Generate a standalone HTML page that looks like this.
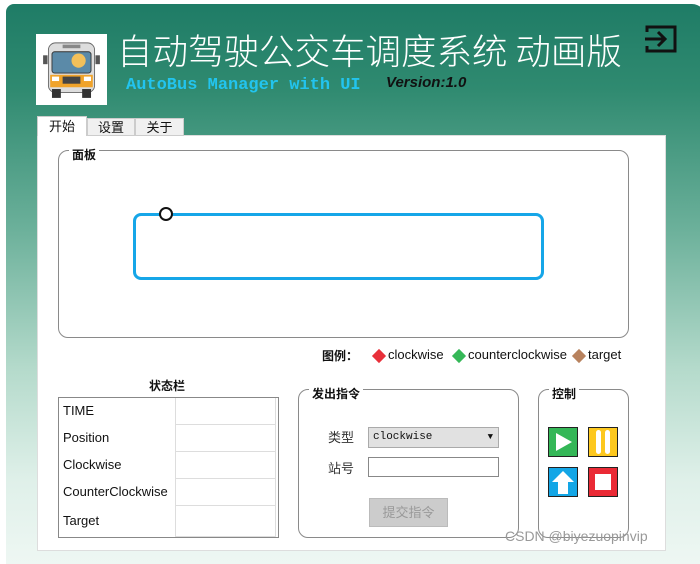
<!DOCTYPE html>
<html><head><meta charset="utf-8"><style>
*{margin:0;padding:0;box-sizing:border-box}
body{width:700px;height:557px;overflow:hidden;background:#fff;position:relative;font-family:"Liberation Sans","Noto Sans CJK SC",sans-serif;font-size:13px;color:#111}
.a{position:absolute}
#win{left:6px;top:4px;width:700px;height:560px;border-radius:8px 14px 0 0;background:linear-gradient(180deg,#1f7c66 0%,#2f8a70 15%,#6bb09a 40%,#b4dacb 65%,#dff0e9 85%,#eef7f3 100%)}
.gb{border:1px solid #8a8a8a;border-radius:10px}
.gl{background:#fff;padding:0 3px;font-weight:bold;font-size:12px}
</style></head><body>
<div id="win" class="a"></div>
<div class="a" style="left:36px;top:34px;width:71px;height:71px;background:#fff">
<svg width="71" height="71" viewBox="0 0 80 80">
<rect x="14" y="10" width="52" height="56" rx="8" fill="#ddd" stroke="#666"/>
<rect x="30" y="12" width="20" height="4" fill="#888"/>
<rect x="18" y="20" width="44" height="24" rx="3" fill="#5b8aa8" stroke="#333"/>
<circle cx="48" cy="30" r="8" fill="#f3c05a"/>
<rect x="16" y="46" width="48" height="14" fill="#f0a32a"/>
<rect x="30" y="48" width="20" height="8" fill="#444"/>
<rect x="18" y="48" width="8" height="5" fill="#fff"/><rect x="54" y="48" width="8" height="5" fill="#fff"/>
<rect x="18" y="62" width="10" height="10" fill="#333"/><rect x="52" y="62" width="10" height="10" fill="#333"/>
<rect x="8" y="24" width="5" height="10" fill="#555"/><rect x="67" y="24" width="5" height="10" fill="#555"/>
</svg></div>
<div class="a" style="left:117px;top:27px;font-size:35.5px;color:#fff;white-space:nowrap;font-family:'Noto Sans CJK SC',sans-serif;font-weight:300;line-height:46px">自动驾驶公交车调度系统 动画版</div>
<div class="a" style="left:126px;top:76px;font-family:'Liberation Mono',monospace;font-weight:bold;font-size:17px;color:#22c4ee">AutoBus Manager with UI</div>
<div class="a" style="left:386px;top:74px;font-style:italic;font-weight:bold;font-size:15px;color:#111">Version:1.0</div>
<svg class="a" style="left:644px;top:23px" width="34" height="32" viewBox="0 0 34 32"><path d="M3 9V4h28v24H3v-5" fill="none" stroke="#111" stroke-width="3"/><path d="M1 16h20M14 9l7 7-7 7" fill="none" stroke="#111" stroke-width="3"/></svg>
<div class="a" style="left:37px;top:135px;width:629px;height:416px;background:#fff;border:1px solid #ddd"></div>
<div class="a" style="left:37px;top:116px;width:50px;height:20px;background:#fff;border:1px solid #ccc;border-bottom:none;text-align:center;line-height:19px">开始</div>
<div class="a" style="left:87px;top:118px;width:48px;height:18px;background:#f0f0f0;border:1px solid #ccc;text-align:center;line-height:17px">设置</div>
<div class="a" style="left:135px;top:118px;width:49px;height:18px;background:#f0f0f0;border:1px solid #ccc;text-align:center;line-height:17px">关于</div>
<div class="a gb" style="left:58px;top:150px;width:571px;height:188px"></div>
<div class="a gl" style="left:69px;top:146px">面板</div>
<div class="a" style="left:133px;top:213px;width:411px;height:67px;border:3px solid #16a6e8;border-radius:8px"></div>
<div class="a" style="left:159px;top:207px;width:14px;height:14px;border:2.5px solid #111;border-radius:50%;background:#fff"></div>
<div class="a" style="left:322px;top:347px;font-weight:bold;font-size:12px">图例：</div>
<div class="a" style="left:374px;top:351px;width:10px;height:10px;background:#e8303a;transform:rotate(45deg)"></div>
<div class="a" style="left:388px;top:347px">clockwise</div>
<div class="a" style="left:454px;top:351px;width:10px;height:10px;background:#35b858;transform:rotate(45deg)"></div>
<div class="a" style="left:468px;top:347px">counterclockwise</div>
<div class="a" style="left:574px;top:351px;width:10px;height:10px;background:#b8825e;transform:rotate(45deg)"></div>
<div class="a" style="left:588px;top:347px">target</div>
<div class="a" style="left:149px;top:377px;font-weight:bold;font-size:12px">状态栏</div>
<div class="a" style="left:58px;top:397px;width:221px;height:141px;border:1px solid #888"></div>
<div class="a" style="left:175px;top:398px;width:101px;height:139px;border-left:1px solid #ddd;border-right:1px solid #ddd"></div>
<div class="a" style="left:175px;top:424px;width:101px;border-top:1px solid #ddd"></div>
<div class="a" style="left:175px;top:451px;width:101px;border-top:1px solid #ddd"></div>
<div class="a" style="left:175px;top:478px;width:101px;border-top:1px solid #ddd"></div>
<div class="a" style="left:175px;top:505px;width:101px;border-top:1px solid #ddd"></div>
<div class="a" style="left:175px;top:536px;width:101px;border-top:1px solid #ddd"></div>
<div class="a" style="left:63px;top:403px">TIME</div>
<div class="a" style="left:63px;top:430px">Position</div>
<div class="a" style="left:63px;top:457px">Clockwise</div>
<div class="a" style="left:63px;top:484px">CounterClockwise</div>
<div class="a" style="left:63px;top:513px">Target</div>
<div class="a gb" style="left:298px;top:389px;width:221px;height:149px"></div>
<div class="a gl" style="left:309px;top:385px">发出指令</div>
<div class="a" style="left:328px;top:427px;color:#333">类型</div>
<div class="a" style="left:368px;top:427px;width:131px;height:21px;background:#e1e1e1;border:1px solid #aaa;font-family:'Liberation Mono',monospace;font-size:11px;line-height:19px;padding-left:4px">clockwise<span style="position:absolute;right:5px;top:0;font-size:9px">▼</span></div>
<div class="a" style="left:328px;top:458px;color:#333">站号</div>
<div class="a" style="left:368px;top:457px;width:131px;height:20px;border:1px solid #888;background:#fff"></div>
<div class="a" style="left:369px;top:498px;width:79px;height:29px;background:#ccc;border:1px solid #bbb;color:#999;text-align:center;line-height:27px">提交指令</div>
<div class="a gb" style="left:538px;top:389px;width:91px;height:149px"></div>
<div class="a gl" style="left:549px;top:385px">控制</div>
<svg class="a" style="left:548px;top:427px" width="31" height="31"><rect x="0.5" y="0.5" width="29" height="29" fill="#34b757" stroke="#222"/><path d="M8 6L24 15 8 24z" fill="#fff"/></svg>
<svg class="a" style="left:588px;top:427px" width="31" height="31"><rect x="0.5" y="0.5" width="29" height="29" fill="#fdc81e" stroke="#222"/><rect x="8" y="3" width="5" height="24" rx="2.5" fill="#fff"/><rect x="17" y="3" width="5" height="24" rx="2.5" fill="#fff"/></svg>
<svg class="a" style="left:548px;top:467px" width="31" height="31"><rect x="0.5" y="0.5" width="29" height="29" fill="#13a6e6" stroke="#222"/><path d="M15 4L26 15H20V27H10V15H4z" fill="#fff"/></svg>
<svg class="a" style="left:588px;top:467px" width="31" height="31"><rect x="0.5" y="0.5" width="29" height="29" fill="#ea2a35" stroke="#222"/><rect x="7" y="7" width="16" height="16" fill="#fff"/></svg>
<div class="a" style="left:505px;top:528px;font-size:14px;color:#999">CSDN @biyezuopinvip</div>
</body></html>
